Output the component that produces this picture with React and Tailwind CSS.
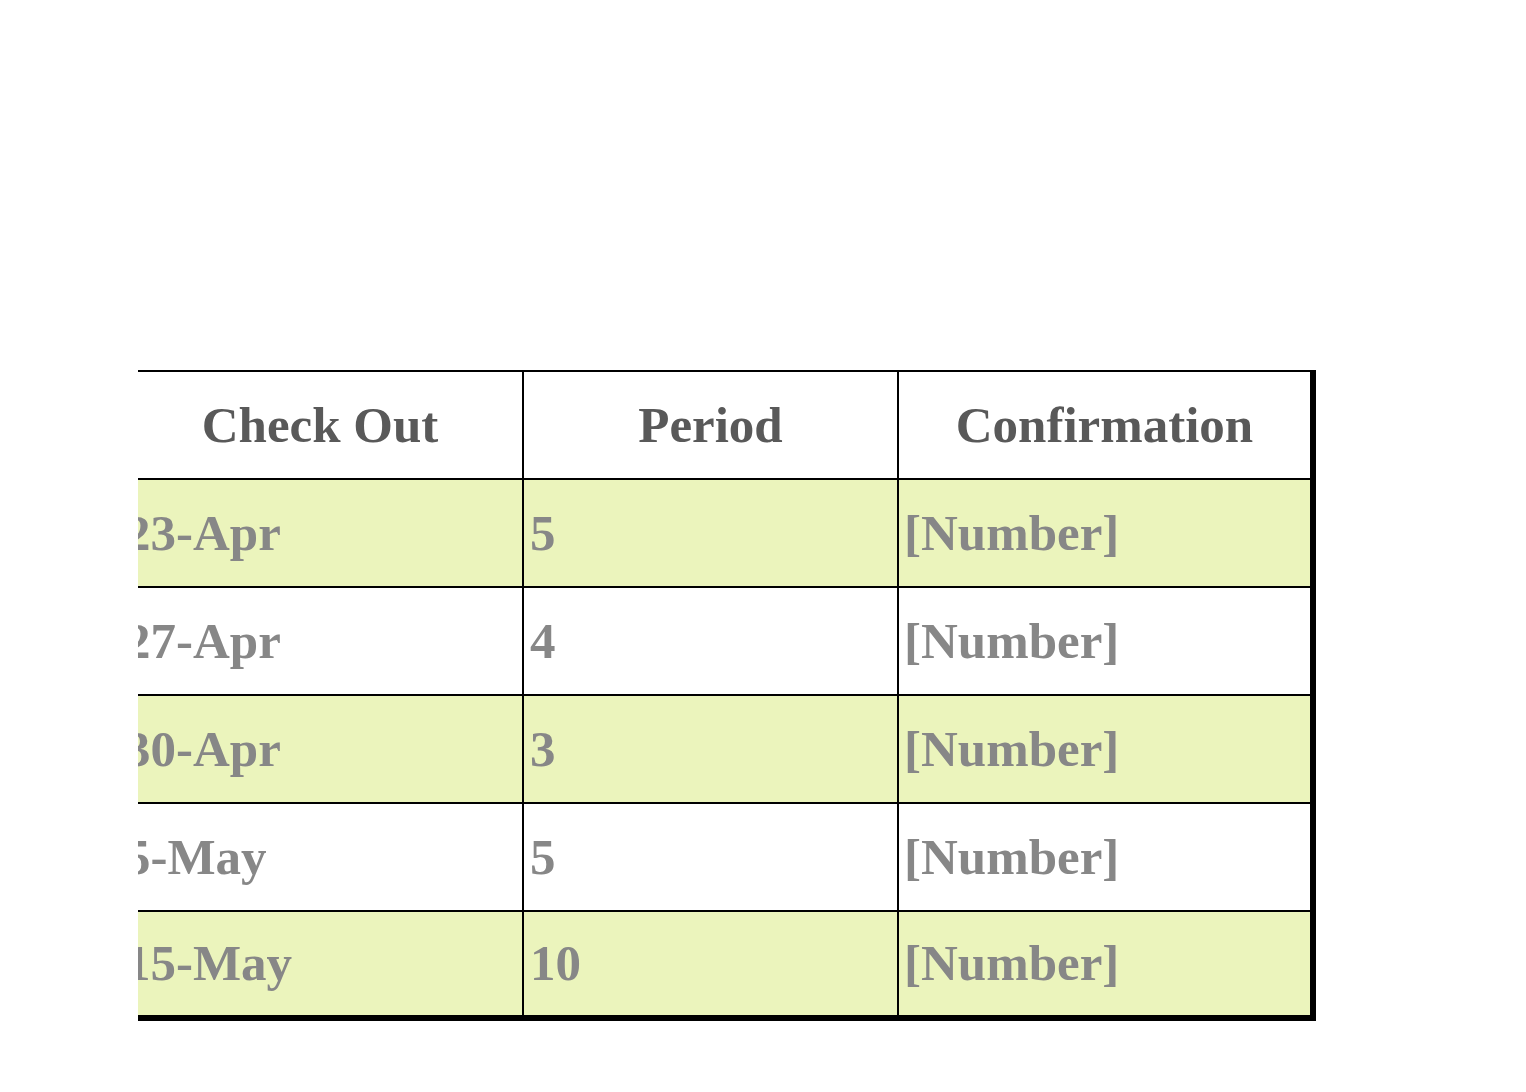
const rows = [
  { out: '23-Apr', period: '5', conf: '[Number]', shade: true },
  { out: '27-Apr', period: '4', conf: '[Number]', shade: false },
  { out: '30-Apr', period: '3', conf: '[Number]', shade: true },
  { out: '5-May', period: '5', conf: '[Number]', shade: false },
  { out: '15-May', period: '10', conf: '[Number]', shade: true },
]

const font = { fontFamily: '"Liberation Serif", "Times New Roman", serif' }

export default function App() {
  return (
    <div className="min-h-[1092px] w-[1526px] bg-white pt-[370px] pl-[138px]" style={font}>
      <div className="w-[1200px] overflow-hidden">
        <div className="-ml-[20px] w-[1198px] border-t-2 border-black">
          <div className="grid grid-cols-[406px_375px_417px] h-[108px] text-[51px] font-bold text-[#595959]">
            <div className="flex items-center justify-center border-r-2 border-b-2 border-black">Check Out</div>
            <div className="flex items-center justify-center border-r-2 border-b-2 border-black">Period</div>
            <div className="flex items-center justify-center border-r-[6px] border-b-2 border-black">Confirmation</div>
          </div>
          {rows.map((r, i) => {
            const last = i === rows.length - 1
            const bg = r.shade ? 'bg-[#ebf4bc]' : 'bg-white'
            const bb = last ? 'border-b-[6px]' : 'border-b-2'
            return (
              <div key={i} className={`grid grid-cols-[406px_375px_417px] ${last ? 'h-[109px]' : 'h-[108px]'} text-[51px] font-bold text-[#878787] ${bg}`}>
                <div className={`flex items-center pl-[7px] border-r-2 ${bb} border-black`}>{r.out}</div>
                <div className={`flex items-center pl-[6px] border-r-2 ${bb} border-black`}>{r.period}</div>
                <div className={`flex items-center pl-[5px] border-r-[6px] ${bb} border-black`}>{r.conf}</div>
              </div>
            )
          })}
        </div>
      </div>
    </div>
  )
}
